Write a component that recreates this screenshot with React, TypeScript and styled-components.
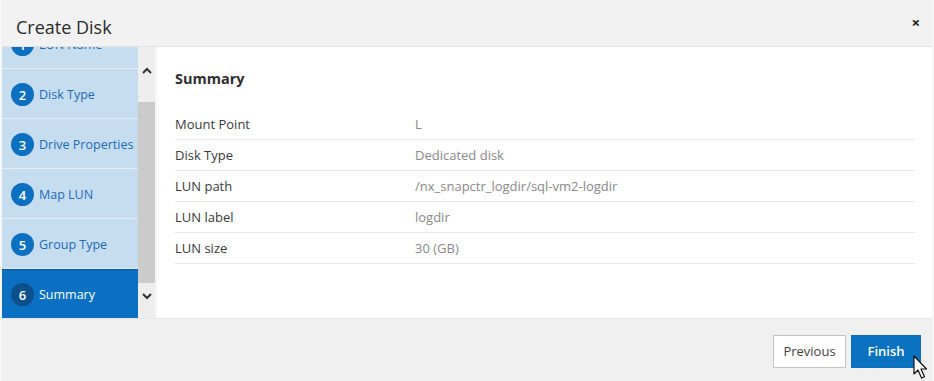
import React from 'react'
import styled, { createGlobalStyle } from 'styled-components'

const GlobalStyle = createGlobalStyle`
  html, body {
    margin: 0;
    padding: 0;
    background: #ffffff;
  }
  body {
    font-family: "Open Sans", "Noto Sans", Arial, sans-serif;
    color: #333;
  }
`

const Dialog = styled.div`
  width: 934px;
  height: 381px;
  display: flex;
  flex-direction: column;
  box-sizing: border-box;
  border-left: 2px solid #f7f7f7;
  border-right: 2px solid #f7f7f7;
  background: #fff;
  position: relative;
  overflow: hidden;
`

const Header = styled.div`
  height: 47px;
  flex: none;
  display: flex;
  align-items: center;
  justify-content: space-between;
  padding: 0 12px 0 14px;
  box-sizing: border-box;
  background: #f2f2f2;
  border-bottom: 1px solid #e2e2e2;
`

const Title = styled.h1`
  margin: 0;
  font-size: 18px;
  font-weight: 400;
  color: #2b2b2b;
  padding-top: 7px;
`

const Close = styled.span`
  font-size: 15px;
  font-weight: 700;
  color: #222;
  margin-top: -2px;
`

const Body = styled.div`
  flex: 1;
  display: flex;
  min-height: 0;
`

const Steps = styled.div`
  width: 136px;
  flex: none;
  overflow: hidden;
  background: #c6ddf0;
`

const StepList = styled.div`
  margin-top: -28px;
`

const Step = styled.div<{ $active?: boolean }>`
  height: 50px;
  box-sizing: border-box;
  display: flex;
  align-items: center;
  gap: 5px;
  padding: 1px 0 0 9px;
  border-bottom: 1px solid #e3eef8;
  border-top: ${p => (p.$active ? '1px dotted #0a3e6e' : '1px solid transparent')};
  background: ${p => (p.$active ? '#0b70c2' : 'transparent')};
  color: ${p => (p.$active ? '#ffffff' : '#1c6bb5')};
  font-size: 12.5px;
  white-space: nowrap;
`

const Badge = styled.span<{ $active?: boolean }>`
  width: 23px;
  height: 23px;
  border-radius: 50%;
  display: inline-flex;
  align-items: center;
  justify-content: center;
  background: ${p => (p.$active ? '#0b4f8c' : '#0c6fc0')};
  color: #fff;
  font-size: 13px;
  font-weight: 600;
  flex: none;
`

const Scrollbar = styled.div`
  width: 17px;
  flex: none;
  display: flex;
  flex-direction: column;
  background: #eeeeee;
  border-right: 2px solid #f6f6f6;
`

const Arrow = styled.div<{ $up?: boolean }>`
  height: 24px;
  display: flex;
  align-items: center;
  justify-content: center;
  flex: none;
  margin: ${p => (p.$up ? '11px 0 0 0' : '0 0 10px 0')};
`

const Track = styled.div`
  flex: 1;
  display: flex;
  flex-direction: column;
`

const Thumb = styled.div`
  margin-top: 20px;
  height: 181px;
  background: #cbcbcb;
`

const Content = styled.div`
  flex: 1;
  padding: 22px 17px 0 18px;
`

const Heading = styled.h2`
  margin: 0 0 18px 0;
  font-size: 14.5px;
  font-weight: 700;
  color: #2e2e2e;
  height: 22px;
`

const Table = styled.div`
  display: flex;
  flex-direction: column;
`

const Row = styled.div`
  display: grid;
  grid-template-columns: 240px 1fr;
  height: 31px;
  align-items: center;
  border-bottom: 1px solid #e8e8e8;
  font-size: 13px;
  box-sizing: border-box;
`

const Label = styled.span`
  color: #3a3a3a;
`

const Value = styled.span`
  color: #8a8a8a;
`

const Footer = styled.div`
  height: 63px;
  flex: none;
  display: flex;
  align-items: center;
  justify-content: flex-end;
  gap: 5px;
  padding: 2px 11px 0 0;
  box-sizing: border-box;
  background: #f0f0f0;
  border-top: 1px solid #e6e6e6;
`

const Button = styled.button<{ $primary?: boolean }>`
  height: 33px;
  padding: 0;
  width: ${p => (p.$primary ? '70px' : '73px')};
  font-family: inherit;
  font-size: 13px;
  font-weight: ${p => (p.$primary ? 600 : 400)};
  border: 1px solid ${p => (p.$primary ? '#0b6fbe' : '#c4c4c4')};
  background: ${p => (p.$primary ? '#0b72c2' : '#ffffff')};
  color: ${p => (p.$primary ? '#ffffff' : '#444444')};
  cursor: pointer;
`

const Cursor = styled.svg`
  position: absolute;
  left: 911px;
  top: 355px;
`

const steps = [
  'LUN Name',
  'Disk Type',
  'Drive Properties',
  'Map LUN',
  'Group Type',
  'Summary',
]

const rows: [string, string][] = [
  ['Mount Point', 'L'],
  ['Disk Type', 'Dedicated disk'],
  ['LUN path', '/nx_snapctr_logdir/sql-vm2-logdir'],
  ['LUN label', 'logdir'],
  ['LUN size', '30 (GB)'],
]

export default function App() {
  return (
    <>
      <GlobalStyle />
      <Dialog>
        <Header>
          <Title>Create Disk</Title>
          <Close>×</Close>
        </Header>
        <Body>
          <Steps>
            <StepList>
              {steps.map((s, i) => {
                const active = i === steps.length - 1
                return (
                  <Step key={s} $active={active}>
                    <Badge $active={active}>{i + 1}</Badge>
                    {s}
                  </Step>
                )
              })}
            </StepList>
          </Steps>
          <Scrollbar>
            <Arrow $up>
              <svg width="10" height="7" viewBox="0 0 10 7">
                <path d="M1 6 L5 2 L9 6" fill="none" stroke="#333" strokeWidth="2" />
              </svg>
            </Arrow>
            <Track>
              <Thumb />
            </Track>
            <Arrow>
              <svg width="10" height="7" viewBox="0 0 10 7">
                <path d="M1 1 L5 5 L9 1" fill="none" stroke="#333" strokeWidth="2" />
              </svg>
            </Arrow>
          </Scrollbar>
          <Content>
            <Heading>Summary</Heading>
            <Table>
              {rows.map(([k, v]) => (
                <Row key={k}>
                  <Label>{k}</Label>
                  <Value>{v}</Value>
                </Row>
              ))}
            </Table>
          </Content>
        </Body>
        <Footer>
          <Button>Previous</Button>
          <Button $primary>Finish</Button>
        </Footer>
        <Cursor width="18" height="26" viewBox="0 0 18 26">
          <path
            d="M1 1 L1 19 L5 15 L8.5 23 L11.5 21.7 L8 14 L13.5 14 Z"
            fill="#fff"
            stroke="#111"
            strokeWidth="1.2"
            strokeLinejoin="round"
          />
        </Cursor>
      </Dialog>
    </>
  )
}
